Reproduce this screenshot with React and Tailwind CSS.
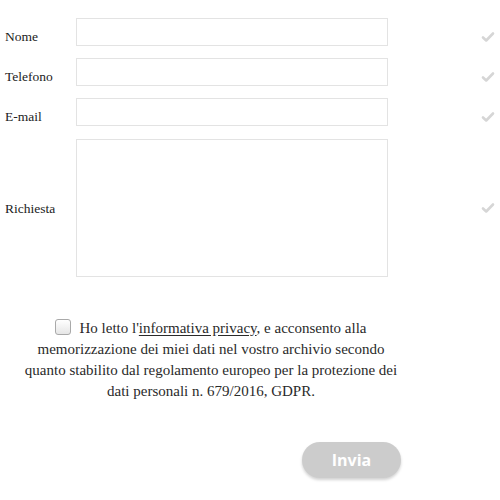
import React from 'react';

const fields = [
  { label: 'Nome', type: 'text' },
  { label: 'Telefono', type: 'text' },
  { label: 'E-mail', type: 'text' },
];

const Tick = () => (
  <svg className="w-[14px] h-[12px] text-[#d6d6d6]" viewBox="0 0 14 12" fill="none" stroke="currentColor" strokeWidth="2.6" strokeLinecap="round" strokeLinejoin="round">
    <path d="M2 6.5l3.2 3L12 2.5" />
  </svg>
);

const App = () => {
  return (
    <div className="w-[500px] h-[500px] bg-white text-[#222] font-['Liberation_Serif',serif] overflow-hidden">
      <div className="pt-[18px] flex flex-col gap-[12px]">
        {fields.map((f) => (
          <div key={f.label} className="flex items-center h-[28px]">
            <label className="w-[76px] pl-[5px] text-[13.5px] pt-[10px]">{f.label}</label>
            <input type={f.type} className="w-[312px] h-[28px] border border-[#e3e3e3] bg-white outline-none" />
            <div className="ml-[93px] pt-[10px]"><Tick /></div>
          </div>
        ))}
        <div className="flex items-center h-[138px] mt-[1px]">
          <label className="w-[76px] pl-[5px] text-[13.5px] pt-[2px]">Richiesta</label>
          <textarea className="w-[312px] h-[138px] border border-[#e3e3e3] bg-white outline-none resize-none" />
          <div className="ml-[93px]"><Tick /></div>
        </div>
      </div>

      <p className="mt-[41px] w-[400px] ml-[11px] text-center text-[15px] leading-[21px] text-[#2a2a2a]">
        <input type="checkbox" className="appearance-none w-[16px] h-[16px] align-[-2px] mr-[8px] rounded-[3px] border border-[#a9a9a9] bg-gradient-to-b from-white to-[#e6e6e6]" />
        Ho letto l'<span className="underline underline-offset-2">informativa privacy</span>, e acconsento alla<br />
        memorizzazione dei miei dati nel vostro archivio secondo<br />
        quanto stabilito dal regolamento europeo per la protezione dei<br />
        dati personali n. 679/2016, GDPR.
      </p>

      <div className="mt-[40px] flex pl-[302px]">
        <button className="w-[99px] h-[36px] rounded-full bg-[#cccccc] text-white font-bold text-[16px] font-['Open_Sans',sans-serif] shadow-[0_2px_3px_rgba(0,0,0,0.18)]">
          Invia
        </button>
      </div>
    </div>
  );
};

export default App;
